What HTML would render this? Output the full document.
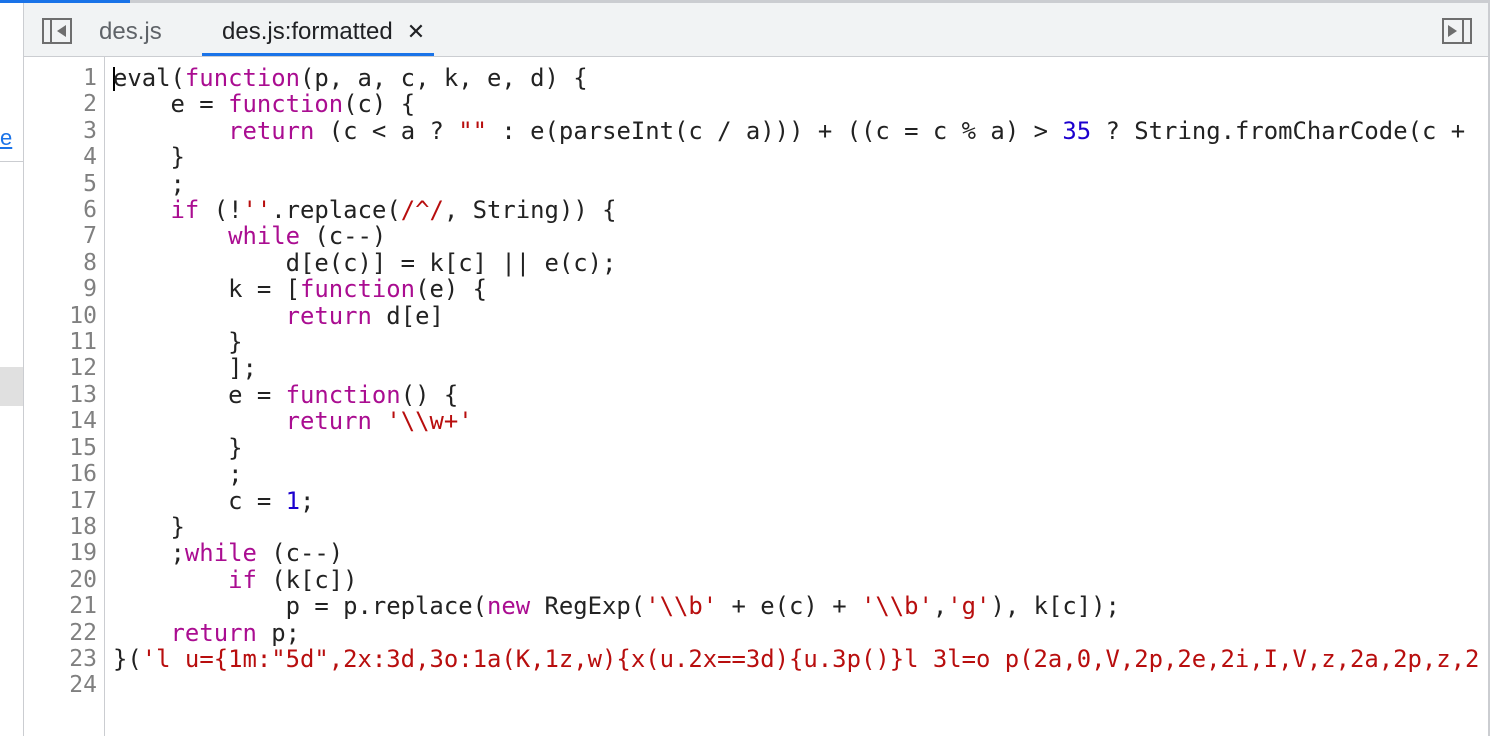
<!DOCTYPE html>
<html><head><meta charset="utf-8"><style>
body{margin:0;width:1490px;height:736px;background:#fff;position:relative;overflow:hidden;font-family:"Liberation Sans",sans-serif}
.top{position:absolute;left:0;top:0;width:1490px;height:3px;background:#cbcdd1}
.blue{position:absolute;left:0;top:0;width:130px;height:3px;background:#1a73e8}
.left{position:absolute;left:0;top:3px;width:23px;height:733px;background:#fff;border-right:1px solid #cbcdd1}
.tabs{position:absolute;left:24px;top:3px;width:1464px;height:53px;background:#f1f3f4;border-bottom:1px solid #cbcdd1}
.rb{position:absolute;left:1488px;top:3px;width:2px;height:733px;background:#cbcdd1}
.tab{position:absolute;top:15px;font-size:24px;color:#5f6368}
.gut{position:absolute;left:24px;top:57px;width:80px;height:679px;border-right:1px solid #cbcdd1}
pre{margin:0;font-family:"DejaVu Sans Mono","Liberation Mono",monospace;font-size:23.9px;line-height:26.4px}
.nums{position:absolute;left:24px;top:65px;width:73px;text-align:right;color:#808080;font-size:23px}
.code{position:absolute;left:113px;top:65px;color:#222}
.k{color:#aa0d91}.s{color:#b80e0e}.n{color:#1c00cf}
</style></head><body>
<div class="left">
<div style="position:absolute;left:0;top:122px;font-size:22px;color:#1a73e8;text-decoration:underline">e</div>
<div style="position:absolute;left:0;top:158px;width:23px;height:1px;background:#cbcdd1"></div>
<div style="position:absolute;left:0;top:364px;width:23px;height:39px;background:#e0e0e0"></div>
</div>
<div class="top"></div><div class="blue"></div>
<div class="tabs">
<svg style="position:absolute;left:18px;top:15px" width="30" height="26"><rect x="1" y="1" width="28" height="24" fill="none" stroke="#6e6e6e" stroke-width="2"/><line x1="9" y1="1" x2="9" y2="25" stroke="#6e6e6e" stroke-width="2"/><polygon points="24,7 24,19 15,13" fill="#6e6e6e"/></svg>
<div class="tab" style="left:75px">des.js</div>
<div class="tab" style="left:198px;color:#202124">des.js:formatted<span style="margin-left:14px;font-size:22px">✕</span></div>
<div style="position:absolute;left:178px;top:50px;width:232px;height:3px;background:#1a73e8"></div>
<svg style="position:absolute;left:1418px;top:15px" width="30" height="26"><rect x="1" y="1" width="28" height="24" fill="none" stroke="#6e6e6e" stroke-width="2"/><line x1="21" y1="1" x2="21" y2="25" stroke="#6e6e6e" stroke-width="2"/><polygon points="6,7 6,19 15,13" fill="#6e6e6e"/></svg>
</div>
<div class="rb"></div>
<div class="gut"></div>
<pre class="nums">1
2
3
4
5
6
7
8
9
10
11
12
13
14
15
16
17
18
19
20
21
22
23
24</pre>
<div style="position:absolute;left:113px;top:67px;width:2px;height:24px;background:#000"></div>
<pre class="code">eval(<span class="k">function</span>(p, a, c, k, e, d) {
    e = <span class="k">function</span>(c) {
        <span class="k">return</span> (c &lt; a ? <span class="s">""</span> : e(parseInt(c / a))) + ((c = c % a) &gt; <span class="n">35</span> ? String.fromCharCode(c + 
    }
    ;
    <span class="k">if</span> (!<span class="s">''</span>.replace(<span class="s">/^/</span>, String)) {
        <span class="k">while</span> (c--)
            d[e(c)] = k[c] || e(c);
        k = [<span class="k">function</span>(e) {
            <span class="k">return</span> d[e]
        }
        ];
        e = <span class="k">function</span>() {
            <span class="k">return</span> <span class="s">'\\w+'</span>
        }
        ;
        c = <span class="n">1</span>;
    }
    ;<span class="k">while</span> (c--)
        <span class="k">if</span> (k[c])
            p = p.replace(<span class="k">new</span> RegExp(<span class="s">'\\b'</span> + e(c) + <span class="s">'\\b'</span>,<span class="s">'g'</span>), k[c]);
    <span class="k">return</span> p;
}(<span class="s">'l u={1m:"5d",2x:3d,3o:1a(K,1z,w){x(u.2x==3d){u.3p()}l 3l=o p(2a,0,V,2p,2e,2i,I,V,z,2a,2p,z,2</span>
</pre>
</body></html>
